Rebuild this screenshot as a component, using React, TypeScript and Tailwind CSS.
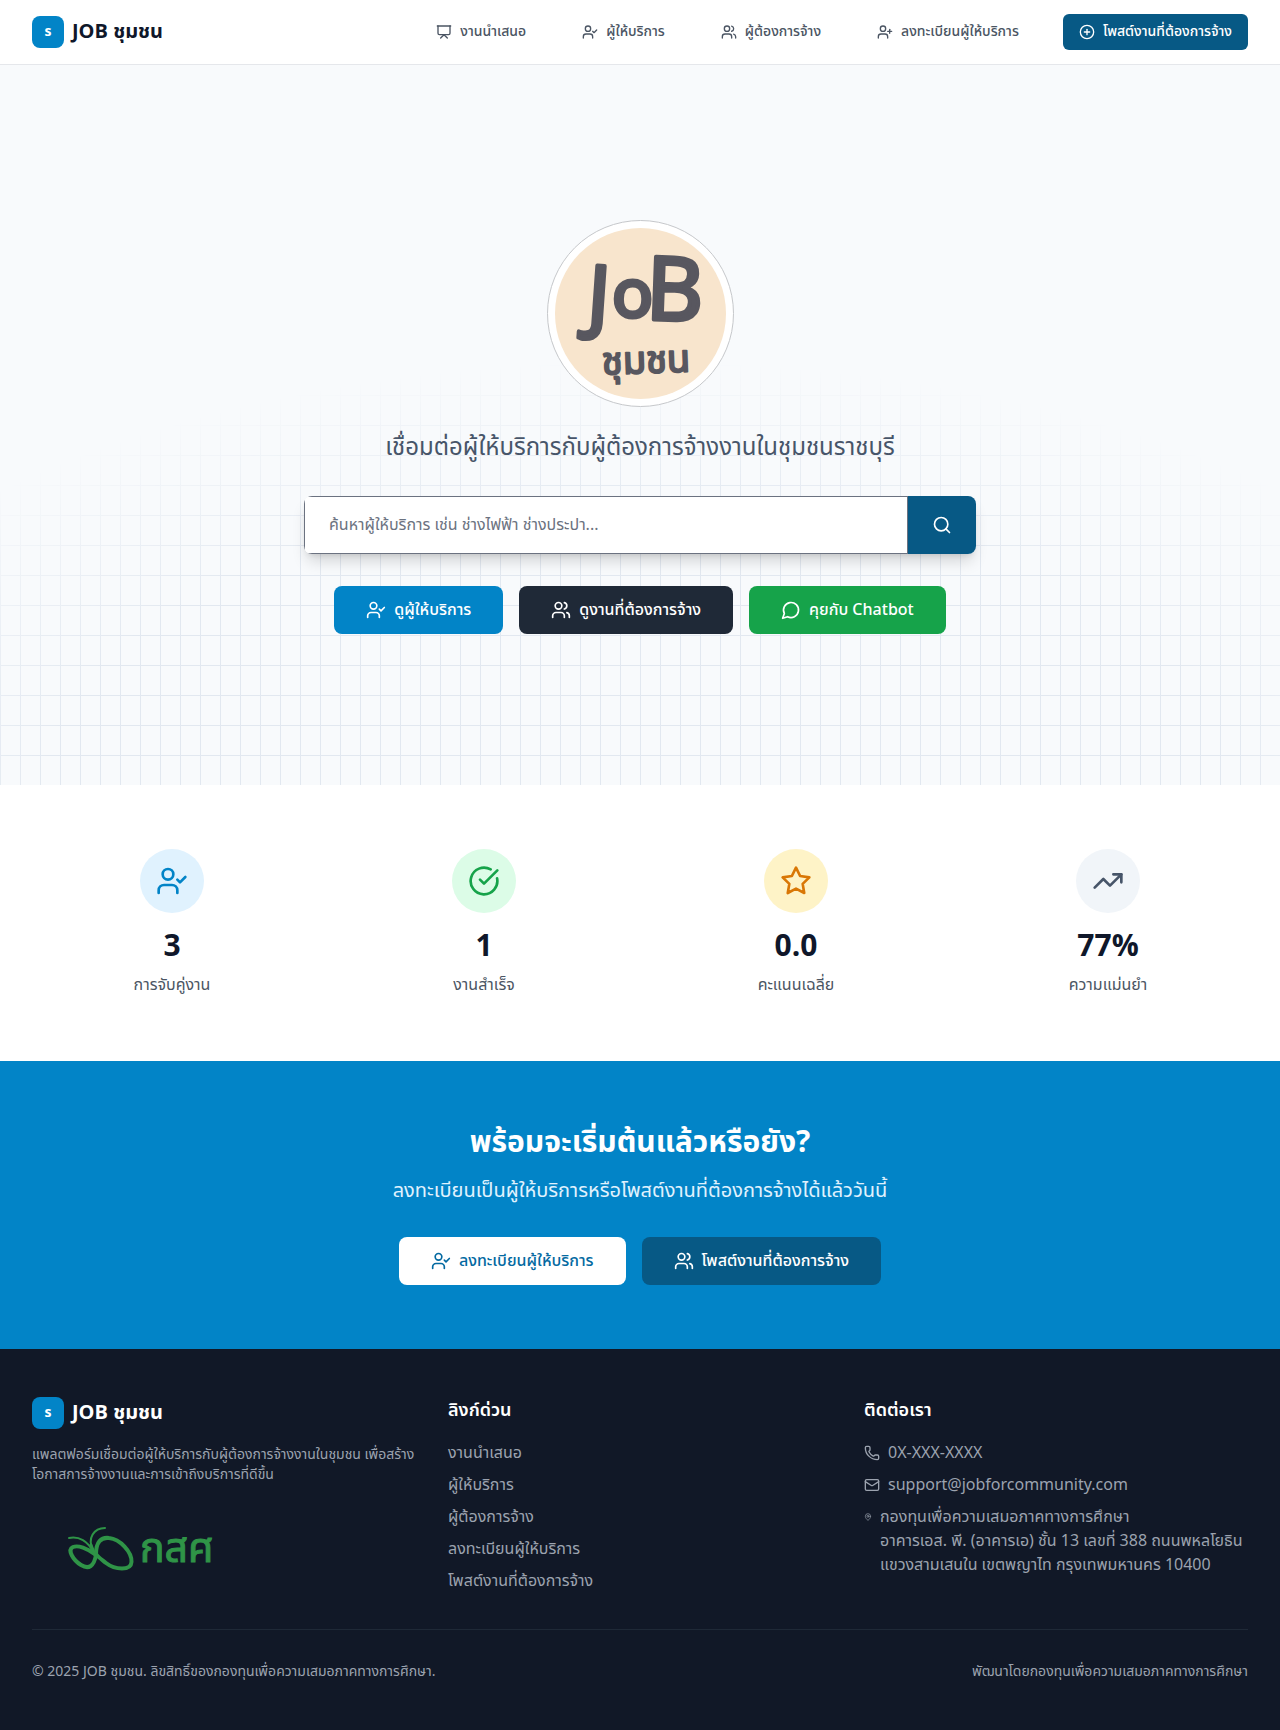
import type { ReactNode } from "react";
import {
  CircleCheckBig,
  CirclePlus,
  Mail,
  MapPin,
  Phone,
  Presentation,
  Search,
  TrendingUp,
  UserCheck,
  UserPlus,
  Users,
} from "lucide-react";

function ChatIcon({ className }: { className: string }) {
  return (
    <svg className={className} viewBox="0 0 24 24" fill="none" stroke="currentColor" strokeWidth="2" strokeLinecap="round" strokeLinejoin="round" aria-hidden="true">
      <path d="M7.9 20A9 9 0 1 0 4 16.1L2 22Z" />
    </svg>
  );
}

function StarIcon({ className }: { className: string }) {
  return (
    <svg className={className} viewBox="0 0 24 24" fill="none" stroke="currentColor" strokeWidth="2" strokeLinecap="round" strokeLinejoin="round" aria-hidden="true">
      <path d="M12 2l3.09 6.26L22 9.27l-5 4.87 1.18 6.88L12 17.77l-6.18 3.25L7 14.14 2 9.27l6.91-1.01z" />
    </svg>
  );
}

function JobLogo() {
  return (
    <svg className="h-48 w-48" viewBox="0 0 192 192" role="img" aria-label="JOB ชุมชน">
      <circle cx="96.5" cy="97.5" r="93" fill="#fff" stroke="#c6c8cb" strokeWidth="1" />
      <circle cx="96.5" cy="97.5" r="85.5" fill="#f8e5cd" />
      <g fill="#58575f" stroke="#58575f" strokeLinejoin="round" strokeWidth="4" fontWeight="400">
        <text x="43" y="108" fontSize="82" transform="rotate(4 50 90)">J</text>
        <text x="68" y="101" fontSize="68">o</text>
        <text x="102" y="104" fontSize="88" transform="rotate(2 125 80)">B</text>
        <text x="58" y="157" fontSize="38" strokeWidth="2" transform="rotate(-2 100 150)">ชุมชน</text>
      </g>
    </svg>
  );
}

function FundLogo() {
  return (
    <svg className="h-24 w-54" viewBox="0 0 216 96" role="img" aria-label="กสศ">
      <g fill="none" stroke="#2f9447" strokeLinecap="round">
        <path d="M64 53C64 41 69 36 77 37C88 38 100 51 99.500 61C99 70 83 69 74 62C69 58 66 56 64 53Z" strokeWidth="4" />
        <path d="M64 54C55 47 46 44 41 46C35 49 41 59 49 64C57 69 62 65 64 54Z" strokeWidth="4" />
        <path d="M61 51C56 40 47 35 37 37" strokeWidth="2" />
        <path d="M61 49C55 37 62 27 73 27" strokeWidth="2" />
        <path d="M59 44L63 54" strokeWidth="3" />
      </g>
      <text x="108" y="61" fontSize="41" fontWeight="400" fill="#2f9447" stroke="#2f9447">กสศ</text>
    </svg>
  );
}

function Brand({ tone }: { tone: string }) {
  return (
    <a href="#" className="flex items-center gap-2">
      <span className="flex h-8 w-8 items-center justify-center rounded-lg bg-[#0284c7] text-sm font-bold text-white">s</span>
      <span className={`text-xl font-bold ${tone}`}>JOB ชุมชน</span>
    </a>
  );
}

const navItems = [
  { label: "งานนำเสนอ", Icon: Presentation },
  { label: "ผู้ให้บริการ", Icon: UserCheck },
  { label: "ผู้ต้องการจ้าง", Icon: Users },
  { label: "ลงทะเบียนผู้ให้บริการ", Icon: UserPlus },
];

const stats = [
  { value: "3", label: "การจับคู่งาน", Icon: UserCheck, tone: "bg-[#e0f2fe] text-[#0284c7]" },
  { value: "1", label: "งานสำเร็จ", Icon: CircleCheckBig, tone: "bg-[#dcfce7] text-[#16a34a]" },
  { value: "0.0", label: "คะแนนเฉลี่ย", Icon: StarIcon, tone: "bg-[#fef3c7] text-[#d97706]" },
  { value: "77%", label: "ความแม่นยำ", Icon: TrendingUp, tone: "bg-[#f1f5f9] text-[#475569]" },
];

const quickLinks = ["งานนำเสนอ", "ผู้ให้บริการ", "ผู้ต้องการจ้าง", "ลงทะเบียนผู้ให้บริการ", "โพสต์งานที่ต้องการจ้าง"];

function ActionButton({ tone, children }: { tone: string; children: ReactNode }) {
  return (
    <button type="button" className={`flex items-center gap-2 rounded-lg px-8 py-3 font-medium ${tone}`}>
      {children}
    </button>
  );
}

export default function App() {
  return (
    <div className="bg-white font-['Noto_Sans_Thai','Noto_Sans',sans-serif] text-base text-[#111827]">
      <header className="border-b border-[#e5e7eb] bg-white">
        <div className="mx-auto flex h-16 max-w-7xl items-center justify-between px-8">
          <Brand tone="text-[#0f172a]" />
          <nav className="flex items-center gap-8">
            {navItems.map(({ label, Icon }) => (
              <a key={label} href="#" className="flex items-center gap-2 px-3 py-2 text-sm font-medium text-[#4b5563]">
                <Icon className="h-4 w-4" />
                {label}
              </a>
            ))}
            <button type="button" className="flex items-center gap-2 rounded-md bg-[#075985] px-4 py-2 text-sm font-medium text-white">
              <CirclePlus className="h-4 w-4" />
              โพสต์งานที่ต้องการจ้าง
            </button>
          </nav>
        </div>
      </header>

      <main>
        <section className="relative flex min-h-[720px] items-center justify-center bg-[#f8fafc] px-8">
          <div className="absolute inset-0 bg-[linear-gradient(to_right,#e2e8f0_1px,transparent_1px),linear-gradient(to_bottom,#e2e8f0_1px,transparent_1px)] bg-[size:20px_30px] [mask-image:radial-gradient(ellipse_70%_59%_at_50%_100%,#000_66%,transparent_100%)]" />
          <div className="relative flex w-full flex-col items-center">
            <JobLogo />
            <p className="mt-6 text-center text-2xl text-[#475569]">เชื่อมต่อผู้ให้บริการกับผู้ต้องการจ้างงานในชุมชนราชบุรี</p>
            <form className="mt-8 flex w-full max-w-2xl overflow-hidden rounded-lg shadow-[0_10px_15px_-3px_rgba(0,0,0,0.15),0_4px_6px_-4px_rgba(0,0,0,0.15)]">
              <input
                type="text"
                aria-label="ค้นหาผู้ให้บริการ"
                placeholder="ค้นหาผู้ให้บริการ เช่น ช่างไฟฟ้า ช่างประปา..."
                className="min-w-0 flex-1 border border-[#6b7280] bg-white px-6 py-4 text-[#111827] placeholder:text-[#6b7280]"
              />
              <button type="submit" aria-label="ค้นหา" className="bg-[#075985] px-6 text-white">
                <Search className="h-5 w-5" />
              </button>
            </form>
            <div className="mt-8 flex flex-wrap justify-center gap-4">
              <ActionButton tone="bg-[#0284c7] text-white">
                <UserCheck className="h-5 w-5" />
                ดูผู้ให้บริการ
              </ActionButton>
              <ActionButton tone="bg-[#1f2937] text-white">
                <Users className="h-5 w-5" />
                ดูงานที่ต้องการจ้าง
              </ActionButton>
              <ActionButton tone="bg-[#16a34a] text-white">
                <ChatIcon className="h-5 w-5" />
                คุยกับ Chatbot
              </ActionButton>
            </div>
          </div>
        </section>

        <section className="bg-white py-16">
          <div className="mx-auto grid max-w-7xl grid-cols-4 gap-8 px-8">
            {stats.map(({ value, label, Icon, tone }) => (
              <div key={label} className="flex flex-col items-center text-center">
                <div className={`mb-4 flex h-16 w-16 items-center justify-center rounded-full ${tone}`}>
                  <Icon className="h-8 w-8" />
                </div>
                <p className="mb-2 text-3xl font-bold text-[#0f172a]">{value}</p>
                <p className="text-[#4b5563]">{label}</p>
              </div>
            ))}
          </div>
        </section>

        <section className="bg-[#0284c7] px-8 py-16 text-center">
          <h2 className="mb-4 text-3xl font-bold text-white">พร้อมจะเริ่มต้นแล้วหรือยัง?</h2>
          <p className="mb-8 text-xl text-[#e0f2fe]">ลงทะเบียนเป็นผู้ให้บริการหรือโพสต์งานที่ต้องการจ้างได้แล้ววันนี้</p>
          <div className="flex flex-wrap justify-center gap-4">
            <ActionButton tone="bg-white text-[#0369a1]">
              <UserCheck className="h-5 w-5" />
              ลงทะเบียนผู้ให้บริการ
            </ActionButton>
            <ActionButton tone="bg-[#075985] text-white">
              <Users className="h-5 w-5" />
              โพสต์งานที่ต้องการจ้าง
            </ActionButton>
          </div>
        </section>
      </main>

      <footer className="bg-[#111827] py-12 text-[#9ca3af]">
        <div className="mx-auto max-w-7xl px-8">
          <div className="grid grid-cols-3 gap-8">
            <div>
              <Brand tone="text-white" />
              <p className="my-4 text-sm">แพลตฟอร์มเชื่อมต่อผู้ให้บริการกับผู้ต้องการจ้างงานในชุมชน เพื่อสร้างโอกาสการจ้างงานและการเข้าถึงบริการที่ดีขึ้น</p>
              <FundLogo />
            </div>
            <div>
              <h3 className="mb-4 text-lg font-semibold text-white">ลิงก์ด่วน</h3>
              <ul className="space-y-2">
                {quickLinks.map((label) => (
                  <li key={label}>
                    <a href="#">{label}</a>
                  </li>
                ))}
              </ul>
            </div>
            <div>
              <h3 className="mb-4 text-lg font-semibold text-white">ติดต่อเรา</h3>
              <ul className="space-y-2">
                <li className="flex items-center gap-2">
                  <Phone className="h-4 w-4" />
                  0X-XXX-XXXX
                </li>
                <li className="flex items-center gap-2">
                  <Mail className="h-4 w-4" />
                  support@jobforcommunity.com
                </li>
                <li className="flex items-start gap-2">
                  <MapPin className="mt-2 h-2 w-2 shrink-0" />
                  <address className="whitespace-nowrap not-italic">
                    กองทุนเพื่อความเสมอภาคทางการศึกษา
                    <br />
                    อาคารเอส. พี. (อาคารเอ) ชั้น 13 เลขที่ 388 ถนนพหลโยธิน
                    <br />
                    แขวงสามเสนใน เขตพญาไท กรุงเทพมหานคร 10400
                  </address>
                </li>
              </ul>
            </div>
          </div>
          <div className="mt-8 flex items-center justify-between border-t border-[#1f2937] pt-8 text-sm">
            <p>© 2025 JOB ชุมชน. ลิขสิทธิ์ของกองทุนเพื่อความเสมอภาคทางการศึกษา.</p>
            <p>พัฒนาโดยกองทุนเพื่อความเสมอภาคทางการศึกษา</p>
          </div>
        </div>
      </footer>
    </div>
  );
}
